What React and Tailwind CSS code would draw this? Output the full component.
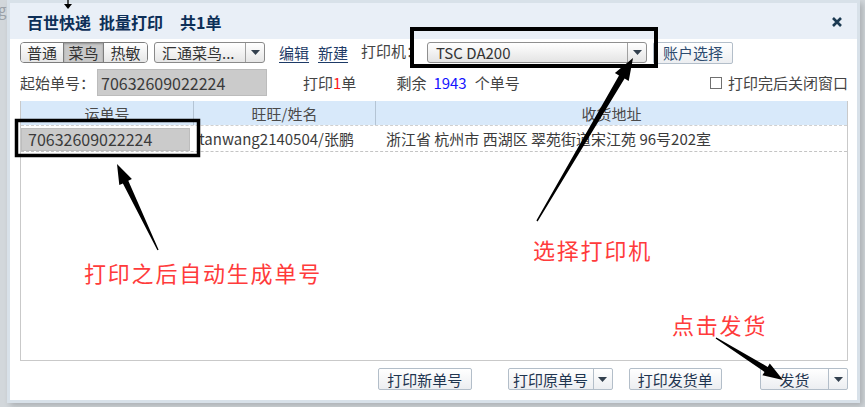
import React from "react";

function Caret() {
  return (
    <svg width="9" height="5" viewBox="0 0 9 5"><path d="M0 0h9L4.5 5z" fill="#33404e" /></svg>
  );
}

function Btn({ children, className = "" }) {
  return (
    <div className={"h-[22px] flex items-center justify-center border border-[#b3bec9] rounded-[2px] bg-gradient-to-b from-white to-[#eceef1] text-[15px] leading-none text-[#1f3550] " + className}>
      {children}
    </div>
  );
}

function SplitBtn({ label, w }) {
  return (
    <div className="h-[22px] flex border border-[#b3bec9] rounded-[2px] bg-gradient-to-b from-white to-[#eceef1] text-[15px] leading-none text-[#1f3550]">
      <div className={"flex items-center justify-center border-r border-[#b3bec9] " + w}>{label}</div>
      <div className="w-[18px] flex items-center justify-center"><Caret /></div>
    </div>
  );
}

export default function App() {
  return (
    <div className="relative w-[865px] h-[407px] overflow-hidden bg-[#d2d7db] font-['Noto_Sans_CJK_SC',sans-serif]">
      <div className="absolute left-[-2px] top-[2px] text-[15px] leading-none text-[#9aa1a8]">g</div>
      <div className="ml-[7px] w-[853px] h-[403px] border-[3px] border-[#d8e1e9] bg-white shadow-[3px_3px_6px_rgba(0,0,0,0.18)] flex flex-col">
        {/* title bar */}
        <div className="h-[36px] shrink-0 bg-[#e9eff7] flex items-center pl-[17px] pr-[12px]">
          <div className="flex items-center text-[16px] font-bold leading-none text-[#0d2f58] pt-[1px]">
            <span>百世快递</span>
            <span className="ml-[8px]">批量打印</span>
            <span className="ml-[17px]">共1单</span>
          </div>
          <div className="ml-auto mr-[3px] mt-[1px]">
            <svg width="10" height="10" viewBox="0 0 10 10"><path d="M1 1L9 9M9 1L1 9" stroke="#1c3a52" strokeWidth="2.6" /></svg>
          </div>
        </div>

        {/* content */}
        <div className="flex flex-col pl-[10px] pr-[9px]">
          {/* row 1 */}
          <div className="mt-[3px] h-[21px] flex items-center">
            <div className="h-[21px] flex border border-[#7d7d7d] rounded-[4px] overflow-hidden text-[15px] leading-none text-[#333]">
              <div className="w-[42px] flex items-center justify-center bg-gradient-to-b from-white to-[#e6e6e6]">普通</div>
              <div className="w-[41px] flex items-center justify-center border-l border-r border-[#7d7d7d] bg-[#c8c8c8] shadow-[inset_0_1px_2px_rgba(0,0,0,0.25)]">菜鸟</div>
              <div className="w-[43px] flex items-center justify-center bg-gradient-to-b from-white to-[#e6e6e6]">热敏</div>
            </div>
            <div className="ml-[6px] h-[21px] w-[111px] flex border border-[#8a8a8a] rounded-[3px] bg-gradient-to-b from-white to-[#e6e6e6] text-[15px] leading-none text-[#333]">
              <div className="flex-1 flex items-center pl-[7px] border-r border-[#a0a0a0]">汇通菜鸟...</div>
              <div className="w-[18px] flex items-center justify-center"><Caret /></div>
            </div>
            <span className="ml-[14px] text-[15px] leading-none text-[#1d3a66] underline underline-offset-[3px]">编辑</span>
            <span className="ml-[9px] text-[15px] leading-none text-[#1d3a66] underline underline-offset-[3px]">新建</span>
            <span className="ml-[13px] text-[15px] leading-none text-[#444] -mt-[4px]">打印机：</span>
            <div className="ml-[6px] h-[21px] w-[220px] flex border border-[#8f8f8f] rounded-[3px] bg-gradient-to-b from-white to-[#e4e4e4] text-[15px] leading-none text-[#333]">
              <div className="flex-1 flex items-center pl-[8px] border-r border-[#a0a0a0]">TSC DA200</div>
              <div className="w-[18px] flex items-center justify-center"><Caret /></div>
            </div>
            <Btn className="ml-[6px] w-[80px] text-[#2c4a6e]">账户选择</Btn>
          </div>

          {/* row 2 */}
          <div className="mt-[6px] h-[27px] flex items-center text-[15px] leading-none text-[#444]">
            <span>起始单号：</span>
            <div className="ml-[2px] h-[27px] w-[170px] flex items-center pl-[3px] bg-[#cbcbcb] border border-[#bcbcbc] text-[16px] text-[#3a3a3a]">70632609022224</div>
            <span className="ml-[36px]">打印<span className="text-[#ff1a1a]">1</span>单</span>
            <span className="ml-[40px]">剩余</span>
            <span className="ml-[7px] text-[#1414ff]">1943</span>
            <span className="ml-[8px]">个单号</span>
            <div className="ml-auto flex items-center">
              <div className="w-[12px] h-[12px] border border-[#707070] bg-white"></div>
              <span className="ml-[6px]">打印完后关闭窗口</span>
            </div>
          </div>

          {/* table */}
          <div className="mt-[5px] h-[260px] border-l border-r border-b border-[#c9c9c9] flex flex-col text-[15px] leading-none text-[#3b3b3b]">
            <div className="h-[24px] bg-[#d8e9fa] flex text-[#4a4a4a]">
              <div className="w-[173px] flex items-center justify-center border-r border-[#b4c4d4]">运单号</div>
              <div className="w-[182px] flex items-center justify-center border-r border-[#b4c4d4]">旺旺/姓名</div>
              <div className="flex-1 flex items-center justify-center">收货地址</div>
            </div>
            <div className="h-[27px] flex border-b border-dashed border-[#c4c4c4] border-t border-t-[#d0d0d0]">
              <div className="w-[173px] flex items-center">
                <div className="ml-[0px] mt-[1px] w-[169px] h-[23px] flex items-center pl-[6px] bg-[#cbcbcb] border border-[#bdbdbd] text-[16px]">70632609022224</div>
              </div>
              <div className="w-[182px] flex items-center pl-[5px] whitespace-nowrap overflow-hidden">tanwang2140504/张鹏</div>
              <div className="flex-1 flex items-center pl-[10px] whitespace-nowrap">浙江省 杭州市 西湖区 翠苑街道宋江苑 96号202室</div>
            </div>
          </div>

          {/* bottom buttons */}
          <div className="mt-[7px] flex items-center">
            <Btn className="ml-[358px] w-[94px]">打印新单号</Btn>
            <div className="ml-[36px]"><SplitBtn label="打印原单号" w="w-[85px]" /></div>
            <Btn className="ml-[16px] w-[94px]">打印发货单</Btn>
            <div className="ml-[38px]"><SplitBtn label="发货" w="w-[68px]" /></div>
          </div>
        </div>
      </div>

      {/* annotations */}
      <div className="absolute left-[84px] top-[261px] text-[22px] leading-[22px] tracking-[1.8px] text-[#ff3b3b] whitespace-nowrap">打印之后自动生成单号</div>
      <div className="absolute left-[533px] top-[238px] text-[22px] leading-[22px] tracking-[1.8px] text-[#ff3b3b] whitespace-nowrap">选择打印机</div>
      <div className="absolute left-[672px] top-[313px] text-[22px] leading-[22px] tracking-[1.8px] text-[#ff3b3b] whitespace-nowrap">点击发货</div>

      <svg className="absolute left-0 top-0 pointer-events-none" width="865" height="407" viewBox="0 0 865 407">
        <path d="M68 0V7" stroke="#000" strokeWidth="1.3" />
        <path d="M64 4L72 4L68 9z" fill="#000" />
        <rect x="412" y="29" width="244" height="37" fill="none" stroke="#000" strokeWidth="4" />
        <rect x="16.5" y="120.5" width="182" height="35" fill="none" stroke="#000" strokeWidth="3.5" />
        <polygon fill="#000" points="117,164 131.9,179.1 128.3,180.8 158.6,249.7 157.4,250.3 122.9,183.4 119.3,185.1" />
        <polygon fill="#000" points="633,58 628.7,81 624.6,78.6 537.6,221.4 536.4,220.6 619,75.4 614.9,73" />
        <polygon fill="#000" points="783,380 762.4,375.3 764.5,371.9 715.6,338.6 716.4,337.4 767.7,366.9 769.8,363.5" />
      </svg>
    </div>
  );
}
